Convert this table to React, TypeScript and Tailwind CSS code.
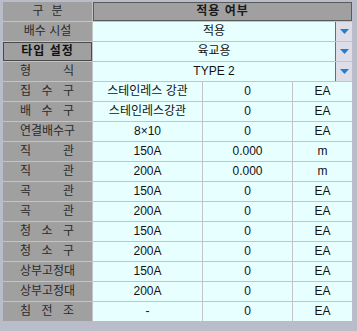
import React from "react";

interface Row {
  label: string[];
  spread?: boolean;
  a: string;
  b: string;
  c: string;
}

const rows: Row[] = [
  { label: ["집", "수", "구"], spread: true, a: "스테인레스 강관", b: "0", c: "EA" },
  { label: ["배", "수", "구"], spread: true, a: "스테인레스강관", b: "0", c: "EA" },
  { label: ["연결배수구"], a: "8×10", b: "0", c: "EA" },
  { label: ["직", "관"], spread: true, a: "150A", b: "0.000", c: "m" },
  { label: ["직", "관"], spread: true, a: "200A", b: "0.000", c: "m" },
  { label: ["곡", "관"], spread: true, a: "150A", b: "0", c: "EA" },
  { label: ["곡", "관"], spread: true, a: "200A", b: "0", c: "EA" },
  { label: ["청", "소", "구"], spread: true, a: "150A", b: "0", c: "EA" },
  { label: ["청", "소", "구"], spread: true, a: "200A", b: "0", c: "EA" },
  { label: ["상부고정대"], a: "150A", b: "0", c: "EA" },
  { label: ["상부고정대"], a: "200A", b: "0", c: "EA" },
  { label: ["침", "전", "조"], spread: true, a: "-", b: "0", c: "EA" },
];

const combos = [
  { label: ["형", "식"], spread: true, value: "TYPE 2" },
];

function Label({ parts, spread }: { parts: string[]; spread?: boolean }) {
  if (spread) {
    return (
      <div className="bg-[#a0a0a0] text-[#2a2a2a] flex justify-between pl-[17px] pr-[18px] items-center">
        {parts.map((p, i) => (
          <span key={i}>{p}</span>
        ))}
      </div>
    );
  }
  return (
    <div className="bg-[#a0a0a0] text-[#2a2a2a] flex justify-center items-center">{parts.join(" ")}</div>
  );
}

function Combo({ value }: { value: string }) {
  return (
    <div className="col-span-3 bg-[#e8ffff] flex items-stretch">
      <div className="flex-1 flex items-center justify-center text-[#111]">{value}</div>
      <div className="w-[17px] bg-[#dedee8] border-l border-[#1f7fd0] flex items-center justify-center">
        <svg width="9" height="5" viewBox="0 0 9 5">
          <polygon points="0,0 9,0 4.5,5" fill="#1f7fd0" />
        </svg>
      </div>
    </div>
  );
}

function App() {
  return (
    <div className="w-[357px] h-[331px] bg-[#b9bdc9] pl-[3px] pt-[2px] font-['Liberation_Sans','Noto_Sans_CJK_KR',sans-serif] text-[12px] leading-[19px]">
      <div className="grid grid-cols-[89px_109px_89px_59px] auto-rows-[19px] gap-px bg-[#c4c4c4] w-[349px]">
        {/* header */}
        <div className="bg-[#a0a0a0] text-[#2a2a2a] flex justify-center items-center gap-[8px]">
          <span>구</span>
          <span>분</span>
        </div>
        <div className="col-span-3 bg-[#a0a0a0] border border-[#5a5a5a] flex items-center justify-center font-bold text-[#1a1a1a] tracking-[1px]">
          적용 여부
        </div>

        <Label parts={["배수 시설"]} />
        <Combo value="적용" />

        <div className="bg-[#a0a0a0] border border-[#4a4a4a] flex items-center justify-center font-bold text-[#111] tracking-[1px]">
          타입 설정
        </div>
        <Combo value="육교용" />

        {combos.map((c, i) => (
          <React.Fragment key={i}>
            <Label parts={c.label} spread={c.spread} />
            <Combo value={c.value} />
          </React.Fragment>
        ))}

        {rows.map((r, i) => (
          <React.Fragment key={i}>
            <Label parts={r.label} spread={r.spread} />
            <div className="bg-[#e8ffff] flex items-center justify-center text-[#111]">{r.a}</div>
            <div className="bg-[#e8ffff] flex items-center justify-center text-[#111]">{r.b}</div>
            <div className="bg-[#e8ffff] flex items-center justify-center text-[#111]">{r.c}</div>
          </React.Fragment>
        ))}
      </div>
    </div>
  );
}

export default App;
